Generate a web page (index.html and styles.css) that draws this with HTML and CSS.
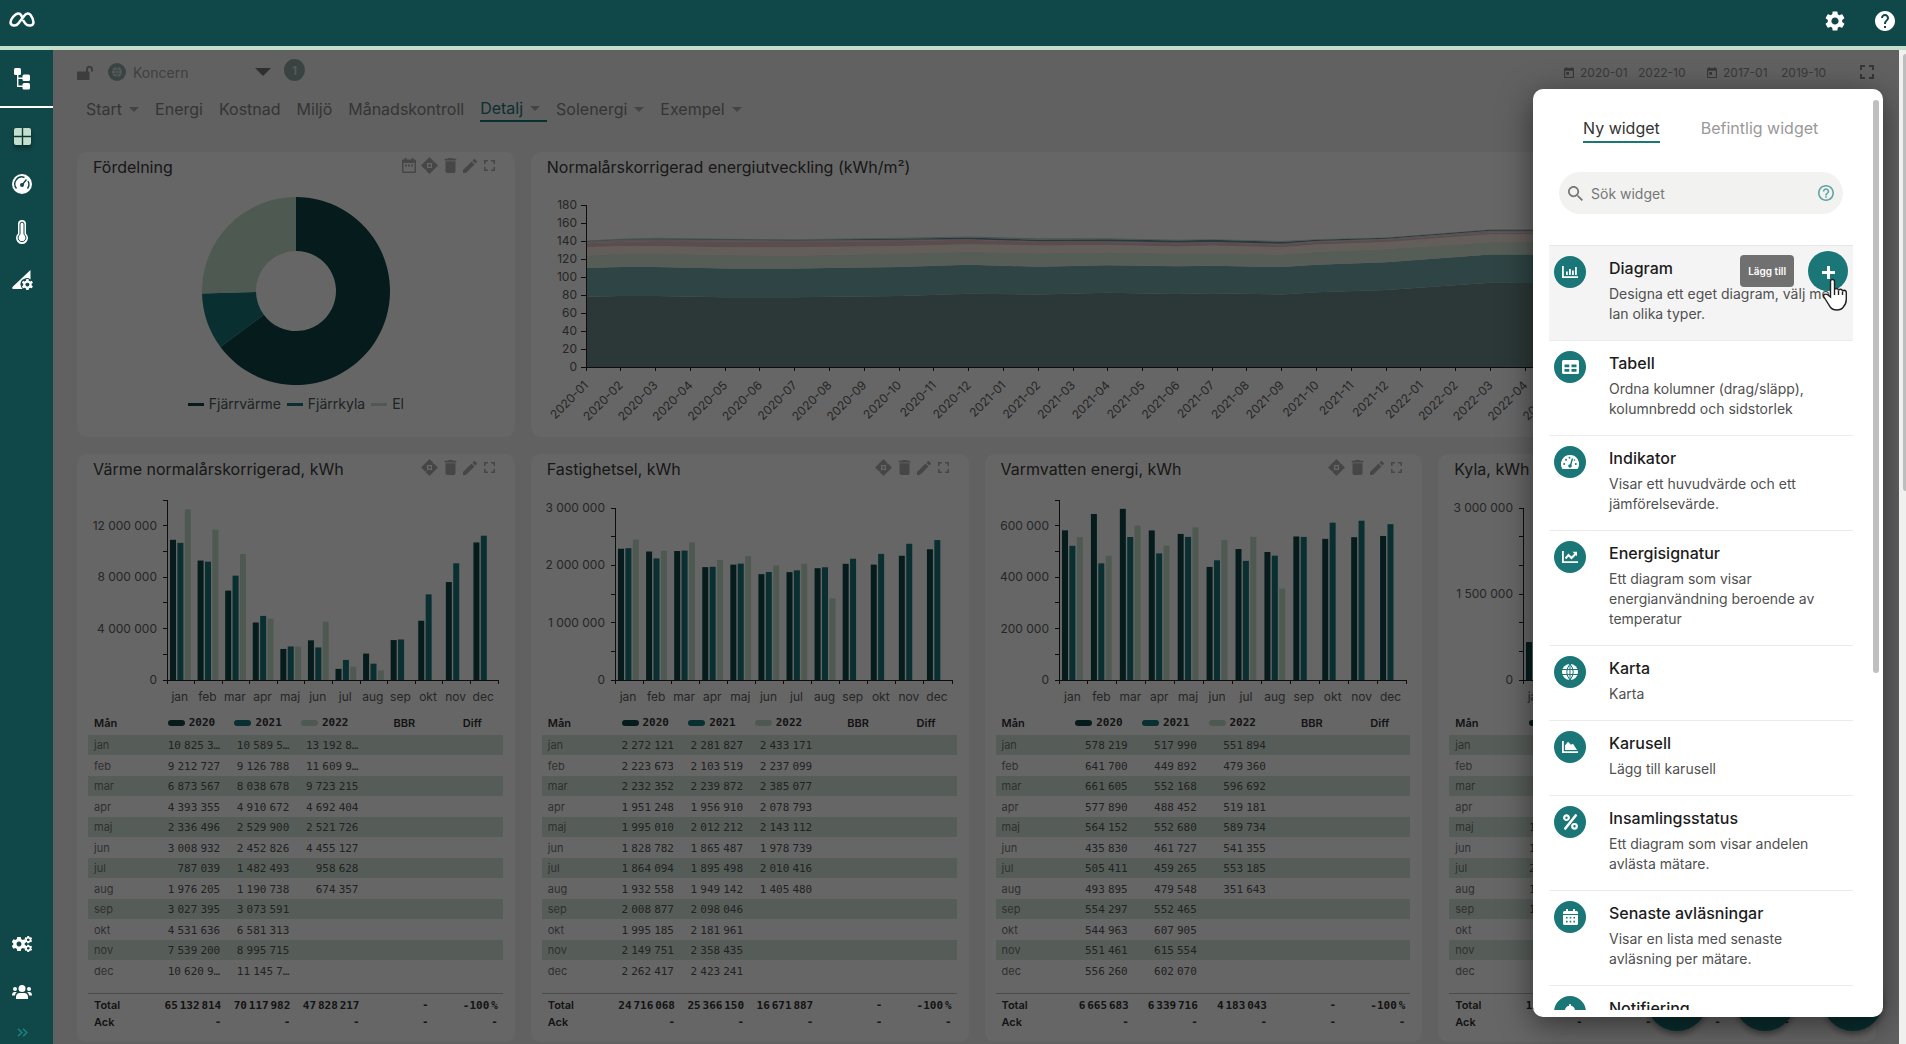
FILE: index.html
```html
<!DOCTYPE html>
<html lang="sv">
<head>
<meta charset="utf-8">
<title>Detalj</title>
<meta name="viewport" content="width=device-width, initial-scale=1">
<link rel="stylesheet" href="styles.css">
</head>
<body>
<svg class="sprite" aria-hidden="true">
  <symbol id="i-settings" viewBox="2 2 20 20"><path d="M19.14 12.94c.04-.3.06-.61.06-.94 0-.32-.02-.64-.07-.94l2.03-1.58c.18-.14.23-.41.12-.61l-1.92-3.32c-.12-.22-.37-.29-.59-.22l-2.39.96c-.5-.38-1.03-.7-1.62-.94l-.36-2.54c-.04-.24-.24-.41-.48-.41h-3.84c-.24 0-.43.17-.47.41l-.36 2.54c-.59.24-1.13.57-1.62.94l-2.39-.96c-.22-.08-.47 0-.59.22L2.74 8.87c-.12.21-.08.47.12.61l2.03 1.58c-.05.3-.09.63-.09.94s.02.64.07.94l-2.03 1.58c-.18.14-.23.41-.12.61l1.92 3.32c.12.22.37.29.59.22l2.39-.96c.5.38 1.03.7 1.62.94l.36 2.54c.05.24.24.41.48.41h3.84c.24 0 .44-.17.47-.41l.36-2.54c.59-.24 1.13-.56 1.62-.94l2.39.96c.22.08.47 0 .59-.22l1.92-3.32c.12-.22.07-.47-.12-.61l-2.01-1.58zM12 15.6c-1.98 0-3.6-1.62-3.6-3.6s1.62-3.6 3.6-3.6 3.6 1.62 3.6 3.6-1.62 3.6-3.6 3.6z"/></symbol>
  <symbol id="i-help" viewBox="2 2 20 20"><path d="M12 2C6.480 2 2 6.480 2 12s4.480 10 10 10 10-4.480 10-10S17.520 2 12 2zm1 17h-2v-2h2v2zm2.070-7.750l-.9.920C13.450 12.900 13 13.500 13 15h-2v-.5c0-1.100.450-2.100 1.170-2.830l1.240-1.260c.370-.360.590-.860.590-1.410 0-1.100-.9-2-2-2s-2 .9-2 2H8c0-2.210 1.790-4 4-4s4 1.790 4 4c0 .880-.360 1.680-.930 2.250z"/></symbol>
  <symbol id="i-help-o" viewBox="2 2 20 20"><path d="M11 18h2v-2h-2v2zm1-16C6.480 2 2 6.480 2 12s4.480 10 10 10 10-4.480 10-10S17.520 2 12 2zm0 18c-4.410 0-8-3.590-8-8s3.590-8 8-8 8 3.590 8 8-3.590 8-8 8zm0-14c-2.210 0-4 1.790-4 4h2c0-1.100.9-2 2-2s2 .9 2 2c0 2-3 1.750-3 5h2c0-2.250 3-2.500 3-5 0-2.210-1.790-4-4-4z"/></symbol>
  <symbol id="i-search" viewBox="3 3 17.5 17.5"><path d="M15.5 14h-.79l-.28-.27C15.41 12.59 16 11.11 16 9.5 16 5.91 13.09 3 9.5 3S3 5.91 3 9.5 5.91 16 9.5 16c1.61 0 3.090-.59 4.230-1.570l.27.28v.79l5 4.990L20.490 19l-4.990-5zm-6 0C7.010 14 5 11.990 5 9.500S7.010 5 9.500 5 14 7.010 14 9.500 11.990 14 9.500 14z"/></symbol>
  <symbol id="i-edit" viewBox="3 3 18 18"><path d="M3 17.250V21h3.750L17.810 9.940l-3.750-3.750L3 17.250zM20.710 7.040c.39-.39.39-1.020 0-1.410l-2.340-2.340c-.39-.39-1.020-.39-1.410 0l-1.830 1.830 3.750 3.750 1.830-1.830z"/></symbol>
  <symbol id="i-trash" viewBox="3 3 18 18"><path d="M6 19c0 1.100.9 2 2 2h8c1.100 0 2-.9 2-2V7H6v12zM19 4h-3.500l-1-1h-5l-1 1H5v2h14V4z"/></symbol>
  <symbol id="i-full" viewBox="5 5 14 14"><path d="M7 14H5v5h5v-2H7v-3zm-2-4h2V7h3V5H5v5zm12 7h-3v2h5v-5h-2v3zM14 5v2h3v3h2V5h-5z"/></symbol>
  <symbol id="i-today" viewBox="3 1 18 20"><path d="M19 3h-1V1h-2v2H8V1H6v2H5c-1.110 0-1.990.9-1.990 2L3 19c0 1.100.890 2 2 2h14c1.100 0 2-.9 2-2V5c0-1.100-.9-2-2-2zm0 16H5V8h14v11zM7 10h5v5H7z"/></symbol>
  <symbol id="i-range" viewBox="0 0 14 15"><path fill-rule="evenodd" d="M1 1.500h1.500V0h2v1.500h5V0h2v1.500H13q1 0 1 1V14q0 1-1 1H1q-1 0-1-1V2.500q0-1 1-1zM1.500 5v8.500h11V5zM3 6.500h2v2H3zm3 0h2v2H6zm3 0h2v2H9z"/></symbol>
  <symbol id="i-move" viewBox="0 0 17 17"><path d="M8.500 0l4.500 4.500-2.200 1.500H6.200L4 4.500zM8.500 17l4.500-4.500-2.200-1.500H6.200L4 12.500zM0 8.500L4.500 4 6 6.200v4.600L4.500 13zM17 8.500L12.500 4 11 6.200v4.600l1.500 2.200zM7.300 7.300h2.400v2.400H7.300z"/></symbol>
  <symbol id="i-lock" viewBox="0 0 16 15"><path d="M1.200 6.500H9V4.200a3.500 3.500 0 0 1 7 0V6.500h-2V4.200a1.500 1.500 0 0 0-3 0V6.500h.8q.7 0 .7.700V14q0 1-1 1H1q-1 0-1-1V7.500q0-1 1.200-1z"/></symbol>
  <symbol id="i-globe" viewBox="0 0 16 16"><circle cx="8" cy="8" r="8"/><path class="cut" d="M0 5.500h16M0 10.500h16M8 0v16M8 0Q1.500 8 8 16M8 0q6.500 8 0 16"/></symbol>
  <symbol id="i-tree" viewBox="0 0 16 22"><rect x="0" y="0" width="7" height="7" rx="1.500"/><rect x="8.500" y="6.500" width="7.500" height="6.500" rx="1.500"/><rect x="8.500" y="15" width="7.500" height="6.500" rx="1.500"/><path d="M3 6h1.400v3.600H9V11H4.400v6.600H9V19H3z"/></symbol>
  <symbol id="i-grid" viewBox="0 0 17 17"><path d="M2 0h5.800v7.800H0V2q0-2 2-2zm7.200 0H15q2 0 2 2v5.800H9.200zM0 9.200h7.800V17H2q-2 0-2-2zm9.200 0H17V15q0 2-2 2H9.200z"/></symbol>
  <symbol id="i-gauge" viewBox="0 0 20 20"><circle cx="10" cy="10" r="10"/><path class="cut15" d="M4.500 14.500A7 7 0 0 1 12.500 3.500M16 7A7 7 0 0 1 15.500 14.500M10 11L14.500 5.500"/><circle class="cutfill" cx="10" cy="11" r="2"/></symbol>
  <symbol id="i-thermo" viewBox="0 0 12 24"><path d="M6 0a4 4 0 0 1 4 4v9.500a6 6 0 1 1-8 0V4a4 4 0 0 1 4-4z"/><path class="cut" d="M6 2.200A2 2 0 0 0 4 4.200V14.400a3.900 3.900 0 1 0 4 0V4.200A2 2 0 0 0 6 2.200z"/><path d="M5.300 7h1.400v8.500h-1.400z"/></symbol>
  <symbol id="i-tri" viewBox="0 0 21 20"><path d="M18.500 0v9.500a6 6 0 0 0-7.800 9.500H1Q-.5 18.500.7 16.800z"/><path transform="translate(9.800 9) scale(.56)" d="M8 0h4l.6 3 2.300 1.300 2.900-1 2 3.400-2.300 2v2.600l2.300 2-2 3.400-2.900-1-2.300 1.300-.6 3H8l-.6-3-2.300-1.300-2.900 1-2-3.400 2.300-2V8.700l-2.300-2 2-3.400 2.900 1L7.400 3zM10 6.500a3.500 3.500 0 1 0 .01 0z" fill-rule="evenodd"/></symbol>
  <symbol id="i-cog" viewBox="0 0 20 20"><path d="M7.500 0h5l.6 3 2 1.200 2.900-1 2.300 4-2.300 2v1.600l2.300 2-2.300 4-2.900-1-2 1.200-.6 3h-5l-.6-3-2-1.200-2.900 1-2.300-4 2.300-2V9.200l-2.300-2 2.300-4 2.900 1 2-1.200zM10 6.500a3.500 3.500 0 1 0 .01 0z" fill-rule="evenodd"/></symbol>
  <symbol id="i-cogs" viewBox="0 0 20 16"><use href="#i-cog" x="0" y="1" width="14" height="14"/><use href="#i-cog" x="12.500" y="0" width="7.500" height="7.500"/><use href="#i-cog" x="12.500" y="8.500" width="7.500" height="7.500"/></symbol>
  <symbol id="i-users" viewBox="0 0 20 14"><circle cx="10" cy="3.500" r="3.500"/><circle cx="3" cy="4" r="2"/><circle cx="17" cy="4" r="2"/><path d="M4 14v-2.500Q4.500 8 7.500 8h5q3 0 3.500 3.500V14zM0 10.500Q0 7 2.500 7h2.300Q3 8.500 2.900 10.500zM20 10.500Q20 7 17.500 7h-2.300q1.800 1.500 1.900 3.500z"/></symbol>
  <symbol id="i-chev" viewBox="0 0 11 9"><path d="M1 .7l3.800 3.800L1 8.300M6 .7l3.800 3.800L6 8.300" fill="none" stroke="currentColor" stroke-width="1.600"/></symbol>
  <symbol id="w-bar" viewBox="0 0 16 12"><path d="M0 0h1.800v10.200H16V12H0zM4 5.500h1.800V9H4zM7 3h1.800v6H7zM10 4.500h1.800V9H10zM13 1h1.800v8H13z"/></symbol>
  <symbol id="w-table" viewBox="0 0 17 14"><path fill-rule="evenodd" d="M1.500 0h14Q17 0 17 1.500v11q0 1.500-1.500 1.500h-14Q0 14 0 12.500v-11Q0 0 1.500 0zM2.500 4.500v2.800h4.800V4.500zm7 0v2.800h5V4.500zm-7 4.500v2.800h4.800V9zm7 0v2.800h5V9z"/></symbol>
  <symbol id="w-dash" viewBox="0 0 18 14"><path d="M9 0a9 9 0 0 1 7.800 13.500q-.3.500-.8.500H2q-.5 0-.8-.5A9 9 0 0 1 9 0z"/><path class="cut15" d="M9.300 11L11.500 3.500"/><g class="cutfill"><circle cx="9" cy="11" r="1.800"/><circle cx="3.200" cy="9" r="1"/><circle cx="5" cy="4.800" r="1"/><circle cx="14.800" cy="9" r="1"/><circle cx="8.500" cy="2.700" r=".9"/><circle cx="13.500" cy="5" r=".8"/></g></symbol>
  <symbol id="w-line" viewBox="0 0 16 12"><path d="M0 0h1.800v10.200H16V12H0z"/><path d="M3.500 7.500L6.500 4l3 3 4-4" fill="none" stroke="currentColor" stroke-width="2"/><path d="M10.500.8H15v4.500z"/></symbol>
  <symbol id="w-area" viewBox="0 0 16 12"><path d="M0 0h1.800v10.200H16V12H0zM3 9V4.500L6 .8l3 3 2-1 4 6.200z"/></symbol>
  <symbol id="w-percent" viewBox="0 0 15 16"><path fill="none" stroke="currentColor" stroke-width="2.600" stroke-linecap="round" d="M12.700 1.500L2.300 14.500"/><g fill="none" stroke="currentColor" stroke-width="2.200"><circle cx="3.500" cy="3.700" r="2.300"/><circle cx="11.500" cy="12.300" r="2.300"/></g></symbol>
  <symbol id="w-cal" viewBox="0 0 15 16"><path fill-rule="evenodd" d="M1.500 2H3V0h2v2h5V0h2v2h1.500Q15 2 15 3.500V5H0V3.500Q0 2 1.500 2zM0 6h15v8.500q0 1.500-1.500 1.500h-12Q0 16 0 14.500zM3 8v1.600h1.600V8zm3.700 0v1.600h1.600V8zm3.700 0v1.600H12V8zM3 11.800v1.600h1.600v-1.600zm3.700 0v1.600h1.600v-1.600zm3.700 0v1.600H12v-1.600z"/></symbol>
  <symbol id="w-bell" viewBox="0 0 14 16"><path d="M7 0q1 0 1 1v.8q4 .8 4 5 0 3.500 2 5V13H0v-1.200q2-1.500 2-5 0-4.200 4-5V1q0-1 1-1zM5 14h4q-.3 2-2 2t-2-2z"/></symbol>
</svg>

<header class="topbar">
  <a class="logo" href="#" aria-label="Hem"><svg viewBox="0 0 26 15"><path d="M13.200 5.500C12.400 2.800 11 1.400 9.300 1.400 6 1.400 1.500 7.500 1.500 10.300c0 3.600 5.500 4.400 7.800 1.200L15.500 3.400c1.800-2.600 4.400-2.600 6.100-.4 1.400 1.900 2.900 5.200 2.900 7.200 0 3.900-5.500 4.500-8 1.500-1-1.200-2-2.600-2.500-3.700"/></svg></a>
  <div class="topbar-actions">
    <button type="button" aria-label="Inställningar"><svg><use href="#i-settings"/></svg></button>
    <button type="button" aria-label="Hjälp"><svg><use href="#i-help"/></svg></button>
  </div>
</header>

<div class="shell">
  <nav class="sidebar" aria-label="Huvudmeny">
    <a class="side-first" href="#" aria-label="Träd"><svg width="16" height="22"><use href="#i-tree"/></svg></a>
    <a class="active" href="#" aria-label="Översikt"><svg width="17" height="17"><use href="#i-grid"/></svg></a>
    <a href="#" aria-label="Mätare"><svg width="20" height="20"><use href="#i-gauge"/></svg></a>
    <a href="#" aria-label="Temperatur"><svg width="12" height="24"><use href="#i-thermo"/></svg></a>
    <a href="#" aria-label="Analys"><svg width="21" height="20"><use href="#i-tri"/></svg></a>
    <a class="side-bottom" href="#" aria-label="System"><svg width="20" height="16"><use href="#i-cogs"/></svg></a>
    <a href="#" aria-label="Användare"><svg width="20" height="14"><use href="#i-users"/></svg></a>
    <button class="expand" type="button" aria-label="Expandera"><svg width="11" height="9"><use href="#i-chev"/></svg></button>
  </nav>

  <main class="main">
    <div class="toolbar">
      <svg class="lock" width="16" height="15"><use href="#i-lock"/></svg>
      <span class="org-icon"><svg width="10" height="10"><use href="#i-globe"/></svg></span>
      <button class="org" type="button">Koncern<i class="caret"></i></button>
      <span class="badge">1</span>
      <div class="dates">
        <svg width="10" height="11"><use href="#i-today"/></svg><span>2020-01</span><span>2022-10</span>
        <svg class="second" width="10" height="11"><use href="#i-today"/></svg><span>2017-01</span><span>2019-10</span>
        <svg class="full" width="14" height="14"><use href="#i-full"/></svg>
      </div>
    </div>
    <nav class="tabs" aria-label="Flikar">
      <a class="has-menu" href="#">Start<i class="caret"></i></a>
      <a href="#">Energi</a>
      <a href="#">Kostnad</a>
      <a href="#">Miljö</a>
      <a href="#">Månadskontroll</a>
      <a class="has-menu current" href="#">Detalj<i class="caret"></i></a>
      <a class="has-menu" href="#">Solenergi<i class="caret"></i></a>
      <a class="has-menu" href="#">Exempel<i class="caret"></i></a>
    </nav>
    <div class="grid">
      <section class="card">
        <header class="card-head"><h2>Fördelning</h2>
          <div class="tools"><svg width="14" height="15"><use href="#i-range"/></svg><svg width="17" height="17"><use href="#i-move"/></svg><svg width="15" height="15"><use href="#i-trash"/></svg><svg width="14" height="14"><use href="#i-edit"/></svg><svg width="11" height="11"><use href="#i-full"/></svg></div>
        </header>
        <div class="donut">
          <svg id="donut" width="188" height="188" viewBox="-94 -94 188 188"></svg>
          <ul class="legend"><li><i class="s2020"></i>Fjärrvärme</li><li><i class="s2021"></i>Fjärrkyla</li><li><i class="s2022"></i>El</li></ul>
        </div>
      </section>
      <section class="card wide">
        <header class="card-head"><h2>Normalårskorrigerad energiutveckling (kWh/m²)</h2></header>
        <div class="chart area" id="area"></div>
      </section>
    </div>
    <div class="fabs">
      <button type="button" aria-label="Redigera"></button><button type="button" aria-label="Dela"></button><button type="button" aria-label="Lägg till"></button>
    </div>
    <div class="backdrop"></div>

    <aside class="panel" aria-label="Widgetar">
      <div class="panel-body">
        <div class="panel-tabs"><button class="on" type="button">Ny widget</button><button type="button">Befintlig widget</button></div>
        <label class="search"><svg width="15" height="15"><use href="#i-search"/></svg><input type="text" placeholder="Sök widget" aria-label="Sök widget"><svg class="hint" width="16" height="16"><use href="#i-help-o"/></svg></label>
        <ul class="widgets">
          <li class="hover"><span class="disc"><svg width="16" height="12"><use href="#w-bar"/></svg></span><div><h3>Diagram</h3><p>Designa ett eget diagram, välj mel<br>lan olika typer.</p></div>
            <span class="tip">Lägg till</span><button class="add" type="button" aria-label="Lägg till Diagram"></button>
            <svg class="pointer" width="26" height="34" viewBox="0 0 26 34"><path d="M8.500 19V3.500q0-2 2-2t2 2V12q0-1.500 2-1.500 1.800 0 2 2 0-1.200 1.900-1.200t2.100 2q.2-1 1.800-1 2 .2 2 2.500V21q0 5-3 8-2 3-6.500 3-4.500 0-6.500-3L2 19q-1-2 .5-2.700 1.700-.600 3.500.700z"/><path d="M12.500 12v5M16.500 12.500V17M20.500 13.500V17"/></svg>
          </li>
          <li><span class="disc"><svg width="17" height="14"><use href="#w-table"/></svg></span><div><h3>Tabell</h3><p>Ordna kolumner (drag/släpp), kolumnbredd och sidstorlek</p></div></li>
          <li><span class="disc"><svg width="18" height="14"><use href="#w-dash"/></svg></span><div><h3>Indikator</h3><p>Visar ett huvudvärde och ett jämförelsevärde.</p></div></li>
          <li><span class="disc"><svg width="16" height="12"><use href="#w-line"/></svg></span><div><h3>Energisignatur</h3><p>Ett diagram som visar energianvändning beroende av temperatur</p></div></li>
          <li><span class="disc"><svg width="16" height="16"><use href="#i-globe"/></svg></span><div><h3>Karta</h3><p>Karta</p></div></li>
          <li><span class="disc"><svg width="16" height="12"><use href="#w-area"/></svg></span><div><h3>Karusell</h3><p>Lägg till karusell</p></div></li>
          <li><span class="disc"><svg width="15" height="16"><use href="#w-percent"/></svg></span><div><h3>Insamlingsstatus</h3><p>Ett diagram som visar andelen avlästa mätare.</p></div></li>
          <li><span class="disc"><svg width="15" height="16"><use href="#w-cal"/></svg></span><div><h3>Senaste avläsningar</h3><p>Visar en lista med senaste avläsning per mätare.</p></div></li>
          <li><span class="disc"><svg width="14" height="16"><use href="#w-bell"/></svg></span><div><h3>Notifiering</h3><p>Skapa en notifiering</p></div></li>
        </ul>
      </div>
      <div class="panel-thumb"></div>
    </aside>
  </main>
  <div class="scrollbar"><div></div></div>
</div>
<script src="app.js"></script>
</body>
</html>
```
FILE: styles.css
```css
* { box-sizing: border-box; }
body { margin: 0; height: 100vh; display: flex; flex-direction: column; overflow: hidden; font-family: Inter, "Liberation Sans", sans-serif; font-size: 14px; color: #333; }
button { font: inherit; color: inherit; background: none; border: 0; padding: 0; }
a { color: inherit; text-decoration: none; }
h2, h3, p, ul { margin: 0; padding: 0; font-weight: 400; list-style: none; }
svg { fill: currentColor; display: block; flex: none; }
.sprite { position: absolute; width: 0; height: 0; }
.cut, .cut15 { fill: none; stroke: var(--cut, #1b7678); stroke-width: 1; }
.cut15 { stroke-width: 1.400; }
.cutfill { fill: var(--cut, #1b7678); }

.topbar { flex: none; height: 50px; background: #104748; border-bottom: 4px solid #c3dfcb; display: flex; justify-content: space-between; padding: 0 11px 0 9px; color: #fff; }
.logo { padding-top: 12px; }
.logo svg { width: 26px; height: 15px; fill: none; stroke: #fff; stroke-width: 2.500; }
.topbar-actions { display: flex; align-items: flex-start; gap: 30px; padding-top: 11px; }
.topbar-actions svg { width: 20px; height: 20px; }

.shell { flex: 1; min-height: 0; display: flex; }
.sidebar { --cut: #104748; flex: none; width: 53px; background: #104748; color: #fff; display: flex; flex-direction: column; }
.sidebar a, .expand { height: 48px; padding-right: 9px; display: flex; align-items: center; justify-content: center; }
.sidebar .side-first { height: 58px; padding-top: 2px; border-bottom: 2px solid #fff; margin-bottom: 4px; }
.sidebar .active { color: #c3dfcb; }
.active svg { filter: drop-shadow(0 3px 2px rgba(0, 0, 0, .4)); overflow: visible; }
.sidebar .side-bottom { margin-top: auto; }
.sidebar .expand { height: 24px; margin-top: 4px; color: #1b8080; }

.main { flex: 1; min-width: 0; position: relative; overflow: hidden; background: #f2f2f2; padding: 0 23px 0 24px; }
.toolbar { height: 44px; display: flex; align-items: center; color: #a0a0a0; }
.lock { color: #999; }
.org-icon { --cut: #8fa9a6; width: 18px; height: 18px; border-radius: 50%; background: #8fa9a6; color: #e0e0e0; display: flex; align-items: center; justify-content: center; margin: 0 7px 0 15px; }
.org { display: flex; align-items: center; justify-content: space-between; width: 138px; font-size: 14px; }
.org .caret { border-width: 8px 8px 0; border-top-color: #777; }
.caret { width: 0; height: 0; border: solid transparent; border-width: 5px 5px 0; border-top-color: #aaa; }
.badge { margin: -4px 0 0 13px; width: 21px; height: 22px; border-radius: 50%; background: #8fa9a6; color: #ddd; font-size: 12px; font-weight: 600; display: flex; align-items: center; justify-content: center; }
.dates { margin-left: auto; display: flex; align-items: center; gap: 6px; font-size: 12px; color: #909090; padding-right: 2px; }
.dates span { width: 52px; }
.dates .second { margin-left: 11px; }
.dates svg { color: #888; }
.dates .full { margin-left: 21px; }
.tabs { height: 30px; display: flex; padding-left: 9px; font-size: 16px; color: #858585; }
.tabs a { height: 28px; line-height: 30px; padding-top: 2px; margin-right: 16px; display: flex; align-items: center; gap: 8px; }
.tabs .has-menu { padding-right: 7px; margin-right: 9px; gap: 7px; }
.tabs .current { color: #1b7678; border-bottom: 2px solid #1b7678; }

.grid { margin-top: 28px; display: grid; grid-template-columns: repeat(4, minmax(0, 1fr)); gap: 17px 16px; }
.card { background: #fff; border-radius: 10px; padding-bottom: 12px; }
.wide { grid-column: span 3; }
.card-head { height: 30px; padding: 0 20px 0 16px; display: flex; align-items: center; justify-content: space-between; }
.card-head h2 { font-size: 16px; color: #3c3c3c; line-height: 28px; }
.tools { display: flex; align-items: center; gap: 5px; color: #b0b0b0; padding-bottom: 3px; }
.tools svg:last-child { margin-left: 2px; }
.donut { display: flex; flex-direction: column; align-items: center; gap: 9px; padding-top: 15px; }
.legend { display: flex; gap: 6px; color: #4a5a5a; line-height: 20px; }
.legend li { display: flex; align-items: center; gap: 5px; }
.legend i { width: 16px; height: 3px; }
.s2020 { background: #104748; }
.s2021 { background: #1b7678; }
.s2022 { background: #c3dfcb; }
.chart { height: 226px; }
.chart.area { height: 243px; }
.chart svg { width: 100%; height: 100%; }
.chart text { font-size: 12px; fill: #606060; }
.axis { stroke: #222; stroke-width: 1; shape-rendering: crispEdges; fill: none; }

.data { display: block; margin: 0 12px 0 11px; font-size: 11px; color: #555; }
.data thead, .data tbody, .data tfoot { display: block; }
.data tr { display: grid; grid-template-columns: repeat(6, minmax(0, 1fr)); align-items: center; }
.data th, .data td { padding: 0 6px; text-align: right; white-space: nowrap; font-weight: 400; }
.data th:first-child { text-align: left; color: #777; }
.data .num { font-family: "DejaVu Sans Mono", "Liberation Mono", monospace; }
.data .sp { font-family: Inter, sans-serif; }
.data thead tr { height: 25px; padding-right: 15px; }
.data thead th, .data thead th:first-child, .data tfoot th, .data tfoot td, .data tfoot th:first-child { font-weight: 600; color: #333; }
.data thead th { display: flex; align-items: center; justify-content: flex-end; gap: 4px; }
.data thead th:first-child { justify-content: flex-start; }
.data thead i { width: 17px; height: 6px; border-radius: 3px; }
.data tbody tr { height: 21px; }
.data tbody tr:nth-child(odd) { height: 20px; background: #d8e9de; }
.data tfoot { margin-top: 12px; border-top: 1px solid #bbb; padding-top: 2px; }
.data tfoot tr { height: 17px; }
.data tfoot td, .data tfoot th { padding: 0 5px 0 6px; }

.fabs { position: absolute; right: 16px; bottom: 13px; display: flex; gap: 28px; }
.fabs button { width: 60px; height: 60px; border-radius: 50%; background: #1b7678; box-shadow: 0 3px 6px rgba(0, 0, 0, .4); }
.backdrop { position: absolute; inset: 0; background: rgba(0, 0, 0, .6); }

.panel { position: absolute; top: 39px; right: 16px; bottom: 27px; width: 350px; background: #fff; border-radius: 10px; padding-bottom: 7px; box-shadow: 0 8px 32px rgba(0, 0, 0, .5); }
.panel-body { height: 100%; overflow: hidden; }
.panel-thumb { position: absolute; right: 4px; top: 11px; width: 6px; height: 573px; border-radius: 3px; background: #bfbfbf; }
.panel-tabs { display: flex; gap: 41px; padding: 24px 0 0 50px; font-size: 16px; color: #999; }
.panel-tabs button { height: 30px; padding-top: 2px; border-bottom: 2px solid transparent; }
.panel-tabs .on { color: #333; border-color: #1b7678; }
.search { margin: 29px 40px 31px 26px; height: 42px; border-radius: 21px; background: #f2f2f1; display: flex; align-items: center; padding: 0 9px; gap: 8px; color: #777; }
.search input { flex: 1; min-width: 0; border: 0; background: none; outline: 0; font: inherit; color: #333; padding: 0; }
.search input::placeholder { color: #777; opacity: 1; }
.search .hint { color: #5fa3a4; }
.widgets { margin: 0 30px 0 16px; border-top: 1px solid #e6e8e8; }
.widgets li { position: relative; display: flex; gap: 23px; padding: 10px 26px 16px 5px; border-bottom: 1px solid #ececec; }
.widgets .hover { background: #f4f4f4; padding-right: 0; }
.disc { flex: none; width: 32px; height: 32px; border-radius: 50%; background: #1b7678; color: #fff; display: flex; align-items: center; justify-content: center; }
.widgets h3 { font-size: 16px; font-weight: 500; line-height: 24px; margin-bottom: 4px; color: #1c1c1c; }
.widgets p { font-size: 14px; line-height: 20px; color: #505050; }
.tip { position: absolute; right: 59px; top: 9px; height: 32px; line-height: 32px; padding: 0 8px; border-radius: 4px; background: #707070; color: #fff; font-size: 10px; font-weight: 600; }
.add { position: absolute; right: 5px; top: 5px; width: 40px; height: 40px; border-radius: 50%; background: linear-gradient(#fff, #fff) 50% 54% / 13px 3px no-repeat, linear-gradient(#fff, #fff) 50% 55% / 3px 13px no-repeat, #1b7678; }
.pointer { position: absolute; right: 5px; top: 32px; fill: #fff; stroke: #222; stroke-width: 1.400; }

.scrollbar { flex: none; width: 7px; background: #f0f0ee; padding: 4px 0 0 4px; }
.scrollbar div { height: 437px; border-radius: 3px 0 0 3px; background: #bdbdbd; }
```
FILE: app.js
```js
const MONTHS = ['jan', 'feb', 'mar', 'apr', 'maj', 'jun', 'jul', 'aug', 'sep', 'okt', 'nov', 'dec'];
const COLORS = ['#104748', '#1b7678', '#c3dfcb'];
const WIDE = '<span class="sp">\u00a0</span>';
const THIN = '<span class="sp">\u2009</span>';
const group = (n, sep) => String(n).replace(/\B(?=(\d{3})+$)/g, sep);
const line = (x1, y1, x2, y2) => `M${x1} ${y1}L${x2} ${y2}`;

const CARDS = [
  { title: 'Värme normalårskorrigerad, kWh', left: 90, max: 14e6, step: 2e6, label: 4e6, clip: 1e7, top: 16,
    total: [65132814, 70117982, 47828217],
    years: [[10825300, 9212727, 6873567, 4393355, 2336496, 3008932, 787039, 1976205, 3027395, 4531636, 7539200, 10620900],
      [10589500, 9126788, 8038678, 4910672, 2529900, 2452826, 1482493, 1190738, 3073591, 6581313, 8995715, 11145700],
      [13192800, 11609900, 9723215, 4692404, 2521726, 4455127, 958628, 674357]] },
  { title: 'Fastighetsel, kWh', left: 84, max: 3e6, step: 5e5, label: 1e6, clip: 1e7, top: 24,
    total: [24716068, 25366150, 16671887],
    years: [[2272121, 2223673, 2232352, 1951248, 1995010, 1828782, 1864094, 1932558, 2008877, 1995185, 2149751, 2262417],
      [2281827, 2103519, 2239872, 1956910, 2012212, 1865487, 1895498, 1949142, 2098046, 2181961, 2358435, 2423241],
      [2433171, 2237099, 2385077, 2078793, 2143112, 1978739, 2010416, 1405480]] },
  { title: 'Varmvatten energi, kWh', left: 74, max: 7e5, step: 1e5, label: 2e5, clip: 1e7, top: 16,
    total: [6665683, 6339716, 4183043],
    years: [[578219, 641700, 661605, 577890, 564152, 435830, 505411, 493895, 554297, 544963, 551461, 556260],
      [517990, 449892, 552168, 488452, 552680, 461727, 459265, 479548, 552465, 607905, 615554, 602070],
      [551894, 479360, 596692, 519181, 589734, 541355, 553185, 351643]] },
  { title: 'Kyla, kWh', left: 85, max: 3e6, step: 5e5, label: 15e5, clip: 1e7, top: 24,
    total: [12104220, 12873110, 9120480],
    years: [[644210, 610380, 702140, 861300, 1104210, 1482300, 2104880, 1802410, 1204300, 820110, 690240, 651200],
      [630120, 602110, 722310, 880420, 1150320, 1522210, 2204110, 1851200, 1250110, 850310, 701220, 640210],
      [650120, 612110, 732310, 890420, 1170320, 1562210, 2254110, 1881200]] }
];

function barChart(el, c) {
  const w = el.clientWidth, base = 196, right = w - 17, h = base - c.top;
  const band = (right - c.left) / 12;
  const y = v => base - v / c.max * h;
  let bars = '', axis = line(c.left, c.top, c.left, base) + line(c.left, base, right, base), labels = '';
  c.years.forEach((vals, s) => vals.forEach((v, m) => {
    const x = c.left + m * band + 3 + s * 7.4;
    bars += `<rect x="${x}" y="${y(v) - 1}" width="6" height="${base - y(v) + 1}" fill="${COLORS[s]}"/>`;
  }));
  for (let v = 0; v <= c.max; v += c.step) {
    axis += line(c.left - 4, y(v), c.left, y(v));
    if (v % c.label === 0) labels += `<text x="${c.left - 10}" y="${y(v) + 4}" text-anchor="end">${group(v, ' ')}</text>`;
  }
  for (let m = 0; m <= 12; m++) axis += line(c.left + m * band, base, c.left + m * band, base + 4);
  MONTHS.forEach((t, m) => { labels += `<text x="${c.left + (m + .5) * band - 1}" y="${base + 21}" text-anchor="middle">${t}</text>`; });
  el.innerHTML = `<svg>${bars}<path class="axis" d="${axis}"/>${labels}</svg>`;
}

function tableFor(c) {
  const cell = v => {
    if (v === undefined) return '<td></td>';
    const text = v >= c.clip ? group(v, ' ').slice(0, 8) + '…' : group(v, ' ');
    return `<td class="num">${text.replace(/ /g, WIDE)}</td>`;
  };
  const rows = MONTHS.map((m, i) => `<tr><th scope="row">${m}</th>${c.years.map(y => cell(y[i])).join('')}<td></td><td></td></tr>`).join('');
  return `<table class="data"><thead><tr><th scope="col">Mån</th>
    ${[2020, 2021, 2022].map(y => `<th scope="col" class="num"><i class="s${y}"></i>${y}</th>`).join('')}
    <th scope="col">BBR</th><th scope="col">Diff</th></tr></thead><tbody>${rows}</tbody>
    <tfoot><tr><th scope="row">Total</th>${c.total.map(t => `<td class="num">${group(t, THIN)}</td>`).join('')}
    <td class="num">-</td><td class="num">-100${THIN}%</td></tr>
    <tr><th scope="row">Ack</th>${'<td class="num">-</td>'.repeat(5)}</tr></tfoot></table>`;
}

const TOOLS = '<svg width="17" height="17"><use href="#i-move"/></svg><svg width="15" height="15"><use href="#i-trash"/></svg><svg width="14" height="14"><use href="#i-edit"/></svg><svg width="11" height="11"><use href="#i-full"/></svg>';
const grid = document.querySelector('.grid');
CARDS.forEach(c => {
  const card = document.createElement('section');
  card.className = 'card';
  card.innerHTML = `<header class="card-head"><h2>${c.title}</h2><div class="tools">${TOOLS}</div></header><div class="chart"></div>${tableFor(c)}`;
  grid.append(card);
  c.el = card.querySelector('.chart');
});

/* Donut: share of each energy type, in degrees clockwise from the top. */
(function donut() {
  const stops = [0, 233.5, 268.5, 360], R = 94, r = 40;
  const at = (deg, rad) => { const a = (deg - 90) * Math.PI / 180; return `${(rad * Math.cos(a)).toFixed(2)} ${(rad * Math.sin(a)).toFixed(2)}`; };
  document.getElementById('donut').innerHTML = COLORS.map((col, i) => {
    const a = stops[i], b = stops[i + 1], big = b - a > 180 ? 1 : 0;
    return `<path fill="${col}" d="M${at(a, R)}A${R} ${R} 0 ${big} 1 ${at(b, R)}L${at(b, r)}A${r} ${r} 0 ${big} 0 ${at(a, r)}Z"/>`;
  }).join('');
})();

/* Stacked area: cumulated kWh/m² at key months, months between are interpolated. */
function areaChart(el) {
  const keys = [0, 1, 2, 4, 6, 9, 11, 13, 15, 17, 18, 20, 21, 23, 26, 33];
  const layers = [
    ['#6b8c8b', [78, 79, 79, 77.5, 77.5, 79, 81.5, 80.5, 82.5, 81, 82, 80.5, 83, 85.5, 93.5, 92]],
    ['#75aaab', [110, 111, 111, 109.5, 109.5, 111, 113.5, 111.5, 113, 112, 112.5, 111, 113.5, 116.5, 125, 124.5]],
    ['#d7e8da', [124, 126, 126, 124.5, 124, 126, 128, 126.5, 127.5, 126, 126.5, 125, 128, 131, 139, 139]],
    ['#faebe1', [133, 134.5, 134.5, 133, 133, 134.5, 136.5, 135, 135.5, 134, 135, 133, 136, 139, 147.5, 147.5]],
    ['#e3bec3', [137.5, 139, 140, 139.5, 139, 140, 141.5, 139, 139, 137.5, 138.5, 136, 139, 141.5, 149.5, 149.5]],
    ['#d6cdd2', [139.5, 141.5, 141.5, 141, 140.5, 141.5, 142, 139.7, 139.7, 138.2, 139, 137, 140, 142.5, 151.5, 151.5]],
    ['#6f9096', [140, 142, 142, 142, 141.5, 142.5, 144, 141.5, 142, 140.5, 141.3, 139, 141.5, 143.5, 152.5, 152.5]],
    ['#b9d4c5', [140.5, 142.5, 143.5, 142.5, 142, 143.5, 145, 143, 143, 141.5, 142, 140, 142, 144, 152.8, 152.8]]
  ];
  const left = 55, top = 23, base = 185, right = el.clientWidth - 142, months = 33;
  const x = m => left + m * (right - left) / months, y = v => base - v * .9;
  let out = '', prev = keys.map(() => 0);
  layers.forEach(([fill, vals]) => {
    const upper = keys.map((k, i) => `${x(k)},${y(vals[i])}`);
    const lower = keys.map((k, i) => `${x(k)},${y(prev[i])}`).reverse();
    out += `<polygon fill="${fill}" points="${upper.concat(lower).join(' ')}"/>`;
    prev = vals;
  });
  let axis = line(left, top, left, base) + line(left, base, right, base), labels = '';
  for (let v = 0; v <= 180; v += 20) {
    axis += line(left - 5, y(v), left, y(v));
    labels += `<text x="${left - 9}" y="${y(v) + 4}" text-anchor="end">${v}</text>`;
  }
  for (let m = 0; m <= months; m++) {
    const name = `${2020 + Math.floor(m / 12)}-${String(m % 12 + 1).padStart(2, '0')}`;
    axis += line(x(m), base, x(m), base + 4);
    labels += `<text text-anchor="end" transform="translate(${x(m) + 3} ${base + 19}) rotate(-45)">${name}</text>`;
  }
  el.innerHTML = `<svg>${out}<path class="axis" d="${axis}"/>${labels}</svg>`;
}

function draw() {
  CARDS.forEach(c => barChart(c.el, c));
  areaChart(document.getElementById('area'));
}
draw();
window.addEventListener('resize', draw);
```
